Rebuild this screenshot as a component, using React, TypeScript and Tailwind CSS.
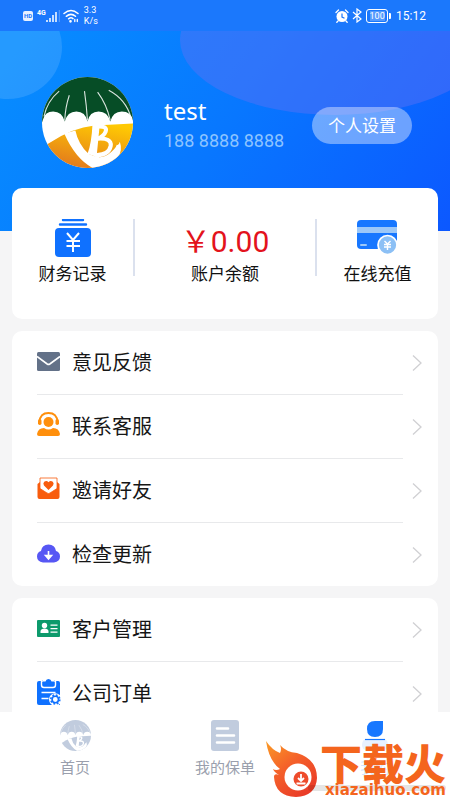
import React from "react";

function UmbrellaLogo({ size, canopy, goldTop, goldBottom, id }: { size: number; canopy: string; goldTop: string; goldBottom: string; id: string }) {
  return (
    <svg width={size} height={size} viewBox="0 0 90 90" aria-hidden="true">
      <defs>
        <clipPath id={`${id}-clip`}><circle cx="45" cy="45" r="45" /></clipPath>
        <linearGradient id={`${id}-gold`} x1="0.7" y1="0" x2="0.3" y2="1">
          <stop offset="0" stopColor={goldTop} />
          <stop offset="1" stopColor={goldBottom} />
        </linearGradient>
      </defs>
      <g clipPath={`url(#${id}-clip)`}>
        <rect width="90" height="90" fill="#fff" />
        <path d="M0 0H90V43Q88 34 79 34Q70 34 67.500 44Q65 34 56 34Q47 34 45 44Q43 34 34 34Q25 34 22.500 44Q20 34 11 34Q3 34 1 42L0 45Z" fill={canopy} />
        <path d="M17 14Q5 24 2 39M27 18Q23 30 22.500 43M42 14Q44 28 45 43M55 15Q64 27 67.500 43M66 13Q83 22 88 40" fill="none" stroke="#fff" strokeOpacity=".85" strokeWidth="1.100" />
        <path d="M6 66Q30 50 52 48L90 46V90H0V70Z" fill={`url(#${id}-gold)`} />
        <path d="M22 56L33 53Q36 67 46 76Q57 82 65 77Q73 71 74 67Q76 68 77 64Q80 73 75 79Q67 90 50 90Q33 81 22 56Z" fill="#fff" />
        <path d="M50 46L57 48L54 79L45 76Q49 66 50 46Z" fill="#fff" />
        <path d="M54 49Q65 48 63 54Q61 59 55 61Q69 60 68 68Q66 78 52 77" fill="none" stroke="#fff" strokeWidth="4" />
      </g>
    </svg>
  );
}

function StatusBar() {
  return (
    <div className="flex h-[31px] shrink-0 items-center justify-between bg-[#1b78fc] pr-[24px] pl-[23px] text-white">
      <div className="flex items-center">
        <span className="flex h-[10px] w-[10px] items-center justify-center rounded-[2px] bg-[#e8f1ff] font-[Roboto,sans-serif] text-[6px] font-bold text-[#1b78fc]">HD</span>
        <span className="ml-[4px] h-[14px] font-[Roboto,sans-serif] text-[7px] leading-[8px] font-bold">4G</span>
        <svg width="14" height="14" viewBox="0 0 14 14" fill="none" aria-hidden="true">
          <path d="M1 11v2M4 9v4M7 6v7M10 3v10" stroke="#fff" strokeWidth="1.500" />
          <path d="M13.300 1v12" stroke="#fff" strokeOpacity=".3" />
        </svg>
        <svg className="ml-[3px]" width="16" height="14" viewBox="0 0 16 14" fill="none" stroke="#fff" strokeWidth="1.500" strokeLinecap="round" aria-hidden="true">
          <path d="M1 4.500Q8-1.500 15 4.500M3.300 7.300Q8 3.500 12.500 7.300M5.600 9.800Q8 8 10 9.600" />
          <circle cx="7.500" cy="12.300" r=".6" fill="#fff" />
          <path d="M11.800 10.500v2M14.300 10.500v2" strokeWidth="1.300" />
        </svg>
        <span className="ml-[5px] font-[Roboto,sans-serif] text-[9px] leading-[11px]">3.3<br />K/s</span>
      </div>
      <div className="flex items-center">
        <svg width="14" height="14" viewBox="0 0 14 14" fill="none" aria-hidden="true">
          <circle cx="7" cy="7.500" r="5.500" fill="#fff" />
          <path d="M1 3.500L3.500 1M13 3.500L10.500 1M3 12L1.800 13.300M11 12l1.200 1.300" stroke="#fff" strokeWidth="1.300" strokeLinecap="round" />
          <path d="M7 4.500v3.500l2.500 1.200" stroke="#1b78fc" strokeWidth="1.200" />
        </svg>
        <svg className="ml-[3px]" width="10" height="15" viewBox="0 0 10 15" fill="none" stroke="#fff" strokeWidth="1.200" aria-hidden="true">
          <path d="M1 4l8 7-4 3V1l4 3-8 7" />
        </svg>
        <span className="ml-[4px] flex h-[14px] w-[22px] items-center justify-center rounded-[3px] border border-white font-[Roboto,sans-serif] text-[9px] text-white">
          <span className="bg-white/25 leading-[10px]">100</span>
        </span>
        <span className="ml-px h-[6px] w-[2px] rounded-r-[1px] bg-white" />
        <span className="ml-[5px] font-[Roboto,sans-serif] text-[12px] leading-[16px]">15:12</span>
      </div>
    </div>
  );
}

function RecordsIcon() {
  return (
    <svg width="38" height="38" viewBox="0 0 38 38" aria-hidden="true">
      <path d="M9 1H29M6 5.500H32" stroke="#0f71ff" strokeWidth="2.400" strokeLinecap="round" />
      <rect x="1" y="9" width="36" height="29" rx="4" fill="#0f71ff" />
      <path d="M13 14L19 21L25 14M19 21V33M12.500 22H26M12.500 27H26" fill="none" stroke="#fff" strokeWidth="2" />
    </svg>
  );
}

function CardIcon() {
  return (
    <svg width="42" height="38" viewBox="0 0 42 38" aria-hidden="true">
      <rect x="0" y="1" width="40" height="29" rx="4" fill="#1777ff" />
      <path d="M0 8H40V14H0Z" fill="#9cc8f8" />
      <rect x="3" y="25" width="7" height="2" rx="1" fill="#9cc8f8" />
      <circle cx="30.500" cy="26" r="9.500" fill="#8cc0f5" stroke="#fff" strokeWidth="1.700" />
      <path d="M27.500 22L30.500 25L33.500 22M30.500 25V31M27 25.500H34M27 28H34" fill="none" stroke="#fff" strokeWidth="1.400" />
    </svg>
  );
}

const icons: Record<string, React.ReactNode> = {
  mail: (
    <>
      <rect x="0" y="4" width="23" height="19" rx="1.500" fill="#637188" />
      <path d="M0 8.500L10.200 16Q11.500 16.800 12.800 16L23 8.500" fill="none" stroke="#fff" strokeWidth="1.600" />
    </>
  ),
  service: (
    <>
      <circle cx="11.500" cy="10" r="5" fill="#ff8f0c" />
      <path d="M2.500 10Q3 1 11.500 1Q20 1 20.500 10" fill="none" stroke="#ff8f0c" strokeWidth="1.800" />
      <rect x="1" y="7" width="3.500" height="6" rx="1.700" fill="#ff8f0c" />
      <rect x="18.500" y="7" width="3.500" height="6" rx="1.700" fill="#ff8f0c" />
      <path d="M0 22Q1 16 7 16Q11.500 19 16 16Q22 16 23 22Q23 24 21 24H2Q0 24 0 22Z" fill="#ff8f0c" />
    </>
  ),
  invite: (
    <>
      <path d="M.500 8L3 6V2H20V6L22.500 8V21Q22.500 23 20.500 23H2.500Q.500 23 .500 21Z" fill="#f85c0d" />
      <path d="M3 2H20V12.500L13 17Q11.500 18 10 17L3 12.500Z" fill="#fff" stroke="#f85c0d" strokeWidth=".8" />
      <path d="M11.500 14L7 9.500Q5.600 7.500 7.200 5.800Q9.600 4 11.500 6.200Q13.400 4 15.800 5.800Q17.400 7.500 16 9.500Z" fill="#f85c0d" />
    </>
  ),
  update: (
    <>
      <path d="M6 22.500Q0 21.500 0 16.500Q0 12 4 11Q5 4.500 11.500 4.500Q18 4.500 19 11Q23 12 23 16.500Q23 21.500 17 22.500Z" fill="#5757f4" />
      <path d="M11.500 11V18M8.500 15.500L11.500 19L14.500 15.500Z" fill="#fff" stroke="#fff" strokeWidth="1.600" />
    </>
  ),
  customer: (
    <>
      <rect x="0" y="5" width="23" height="17" rx="1" fill="#0d9a6c" />
      <circle cx="7.500" cy="10.500" r="2.700" fill="#fff" />
      <path d="M3.500 18V16Q4 13.500 7.500 13.500Q11 13.500 11.500 16V18ZM13.500 9.500H20.500V10.800H13.500ZM13.500 13H20.500V14.300H13.500ZM13.500 16.500H20.500V17.800H13.500Z" fill="#fff" />
    </>
  ),
  order: (
    <>
      <path d="M2 2H21Q23 2 23 4V26H2Q0 26 0 24V4Q0 2 2 2Z" fill="#0f71ff" />
      <path d="M4.500 1V6Q4.500 8.500 7 8.500H16Q18.500 8.500 18.500 6V1" fill="#0f71ff" stroke="#fff" strokeWidth="1.400" />
      <path d="M5.300 0H17.700V3H5.300Z" fill="#fff" />
      <path d="M6 2.500H8.500Q9 0 11.500 0Q14 0 14.500 2.500H17V6.500H6Z" fill="#0f71ff" />
      <path d="M4.500 13.500H18.500M4.500 19.500H11.500" stroke="#fff" strokeWidth="1.600" />
      <circle cx="18.300" cy="20.500" r="6.300" fill="#fff" />
      <circle cx="18.300" cy="20.500" r="3.200" fill="#fff" stroke="#0f71ff" strokeWidth="1.600" />
      <circle cx="18.300" cy="20.500" r="4.500" fill="none" stroke="#0f71ff" strokeWidth="1.600" strokeDasharray="1.800 1.734" />
    </>
  ),
};

function MenuCard({ items }: { items: { icon: string; label: string }[] }) {
  return (
    <ul className="mt-[12px] rounded-[10px] bg-white">
      {items.map((item, i) => (
        <li key={item.label}>
          {i > 0 && <hr className="mr-[35px] ml-[25px] border-t border-[#e8e9eb]" />}
          <button type="button" className="flex h-[63px] w-full items-center pr-[16px] pl-[25px] text-left">
            <svg width="24" height="26" viewBox="0 0 24 26" aria-hidden="true" className="mb-[4px]">{icons[item.icon]}</svg>
            <span className="ml-[11px] flex-1 text-[20px] leading-[28px] text-[#161616]">{item.label}</span>
            <svg width="10" height="18" viewBox="0 0 10 18" fill="none" stroke="#d0d0d3" strokeWidth="1.300" aria-hidden="true">
              <path d="M1 1.500L9 9L1 16.500" />
            </svg>
          </button>
        </li>
      ))}
    </ul>
  );
}

function Watermark() {
  return (
    <div className="pointer-events-none absolute right-[4px] bottom-0 flex h-[60px] w-[181px] text-[#f4651d]">
      <svg className="absolute bottom-[2px] left-0" width="53" height="58" viewBox="0 0 53 58" aria-hidden="true">
        <defs>
          <linearGradient id="flame" x1="0" y1="0" x2=".7" y2="1">
            <stop offset="0" stopColor="#fb9b25" />
            <stop offset=".5" stopColor="#f4602a" />
            <stop offset="1" stopColor="#ea3c28" />
          </linearGradient>
        </defs>
        <path d="M1 1Q7 10 15 13Q17 9 15 5Q21 12 32 13Q52 19 52 38Q51 56 31 57Q10 56 9 37Q9 33 14 35Q9 32 8 29Q11 31 15 29Q4 21 1 1Z" fill="url(#flame)" />
        <circle cx="33" cy="37" r="13.500" fill="#fff" />
        <circle cx="36" cy="39" r="7.500" fill="#ee4b2b" />
        <path d="M36 34V40M33 38L36 41L39 38M31.500 43.500H40.500" fill="none" stroke="#fff" strokeWidth="1.800" />
      </svg>
      <div className="absolute right-0 bottom-[9px] h-[6px] w-[138px] rounded-full bg-black/10" />
      <div className="relative ml-auto flex flex-col items-end">
        <span className="font-['Noto_Sans_CJK_SC',sans-serif] text-[42px] leading-[44px] font-black">下载火</span>
        <span className="font-['DejaVu_Sans',sans-serif] text-[15px] leading-[12px] font-bold">xiazaihuo.com</span>
      </div>
    </div>
  );
}

export default function App() {
  return (
    <div className="flex h-screen flex-col overflow-hidden bg-[#f5f5f6] font-['Noto_Sans','Noto_Sans_CJK_SC',sans-serif]">
      <StatusBar />
      <main className="relative min-h-0 flex-1 overflow-y-auto [scrollbar-width:none]">
        <div className="absolute inset-x-0 top-0 h-[200px] overflow-hidden bg-[linear-gradient(125deg,#078cff_5%,#0877ff_50%,#0c58ff_100%)]">
          <div className="absolute -top-[36px] -left-[46px] h-[104px] w-[108px] rounded-[50%] bg-white/12" />
          <div className="absolute -top-[66px] -right-[40px] h-[150px] w-[310px] rounded-[50%] bg-[#6070f5]/45" />
        </div>
        <div className="relative px-[12px] pb-[24px]">
          <section className="flex h-[157px] items-start pt-[46px] pr-[26px] pl-[30px]">
            <UmbrellaLogo id="avatar" size={91} canopy="#064d26" goldTop="#ffc903" goldBottom="#e2781d" />
            <div className="ml-[31px] flex-1 pt-[18px]">
              <h1 className="text-[24px] leading-[32px] text-white">test</h1>
              <p className="font-[Roboto,sans-serif] text-[18px] leading-[28px] text-[#8dc4ff]">188 8888 8888</p>
            </div>
            <button type="button" className="mt-[30px] h-[37px] w-[100px] rounded-full bg-white/40 text-[17px] leading-[24px] text-white">个人设置</button>
          </section>

          <section className="flex h-[131px] items-start rounded-[10px] bg-white pt-[31px] text-[17px] leading-[24px] text-[#111]">
            <button type="button" className="flex w-[121px] flex-col items-center">
              <RecordsIcon />
              <span className="mt-[5px]">财务记录</span>
            </button>
            <div className="h-[57px] w-[2px] bg-[#dbe1ee]" />
            <div className="flex flex-1 flex-col items-center">
              <p className="mt-[4px] h-[39px] font-[Roboto,'Noto_Sans_CJK_SC',sans-serif] text-[30px] leading-[38px] text-[#e3131c]">￥0.00</p>
              <span>账户余额</span>
            </div>
            <div className="h-[57px] w-[2px] bg-[#dbe1ee]" />
            <button type="button" className="flex w-[121px] flex-col items-center">
              <CardIcon />
              <span className="mt-[5px]">在线充值</span>
            </button>
          </section>

          <MenuCard
            items={[
              { icon: "mail", label: "意见反馈" },
              { icon: "service", label: "联系客服" },
              { icon: "invite", label: "邀请好友" },
              { icon: "update", label: "检查更新" },
            ]}
          />
          <MenuCard
            items={[
              { icon: "customer", label: "客户管理" },
              { icon: "order", label: "公司订单" },
            ]}
          />
        </div>
      </main>

      <nav className="relative flex h-[88px] shrink-0 bg-white pt-[8px] text-[15px] leading-[22px] text-[#9a9fad]">
        <button type="button" className="flex flex-1 flex-col items-center gap-[5px]">
          <UmbrellaLogo id="home" size={31} canopy="#c1ccde" goldTop="#c1ccde" goldBottom="#c1ccde" />
          <span>首页</span>
        </button>
        <button type="button" className="flex flex-1 flex-col items-center gap-[5px]">
          <svg width="28" height="31" viewBox="0 0 28 31" aria-hidden="true">
            <rect width="28" height="31" rx="3" fill="#c1ccde" />
            <path d="M6 8.500H17M6 15.500H23M6 22.500H23" stroke="#fff" strokeWidth="2.600" strokeLinecap="round" />
          </svg>
          <span>我的保单</span>
        </button>
        <button type="button" className="flex flex-1 flex-col items-center gap-[5px]" aria-current="page">
          <svg width="28" height="31" viewBox="0 0 28 31" aria-hidden="true">
            <path d="M14 1H22V9Q22 17 14 17Q6 17 6 9Q6 1 14 1Z" fill="#1777ff" />
            <path d="M4 19H24Q27 21 27 25Q27 30 22 30H6Q1 30 1 25Q1 21 4 19Z" fill="#e8f1ff" />
            <path d="M4 19.500H24" stroke="#1777ff" strokeWidth="1.200" />
          </svg>
          <span className="text-[#1777ff]/20">我的</span>
        </button>
        <Watermark />
      </nav>
    </div>
  );
}
